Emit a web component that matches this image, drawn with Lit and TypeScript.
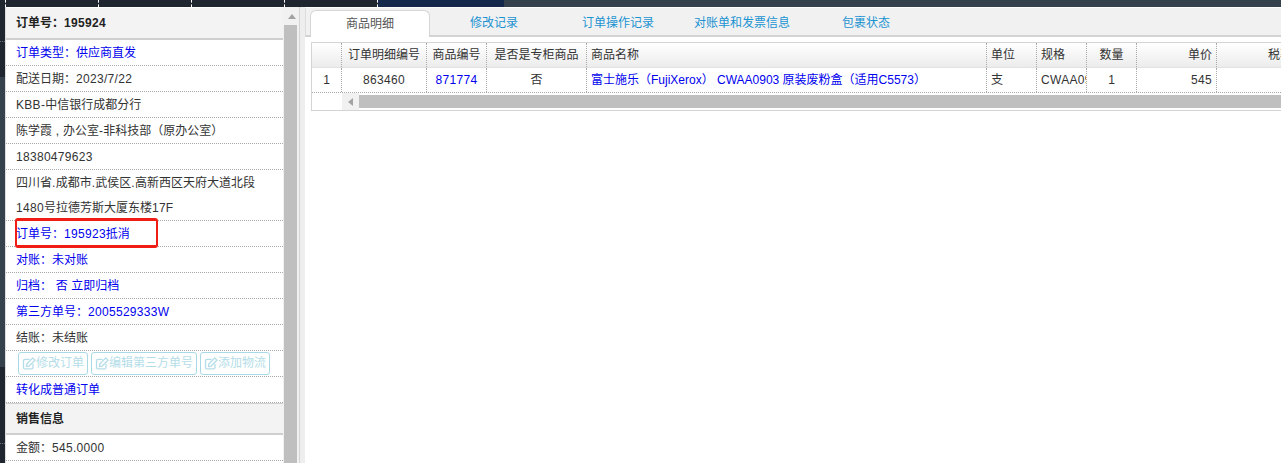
import { LitElement, html, css, svg } from "lit";
import { customElement } from "lit/decorators.js";

const editIcon = svg`<path d="M11 8V11.4C11 12.3 10.4 12.9 9.5 12.9H3C2.1 12.9 1.5 12.3 1.5 11.4V4.9C1.5 4 2.1 3.4 3 3.4H7.6" fill="none" stroke="currentColor" stroke-width="1.3"/><path d="M4.8 8 10.7 1.9 13 4.2 6.9 10.2 4.4 10.6Z" fill="none" stroke="currentColor" stroke-width="1.3" stroke-linejoin="round"/>`;

const t = (s: string) =>
  s.split(/([\x20-\x7e]+)/).map((p, i) => (i % 2 ? html`<span class="l">${p}</span>` : p));

type Row = { text: string; cls?: string };
const rows: Row[] = [
  { text: "订单类型：供应商直发", cls: "blue" },
  { text: "配送日期：2023/7/22" },
  { text: "KBB-中信银行成都分行" },
  { text: "陈学霞 , 办公室-非科技部（原办公室）" },
  { text: "18380479623" },
  { text: "四川省.成都市.武侯区.高新西区天府大道北段 1480号拉德芳斯大厦东楼17F", cls: "two" },
];
const rows2: Row[] = [
  { text: "对账：未对账", cls: "blue" },
  { text: "归档： 否 立即归档", cls: "blue pre" },
  { text: "第三方单号：2005529333W", cls: "blue" },
  { text: "结账：未结账" },
];
const tabs = ["商品明细", "修改记录", "订单操作记录", "对账单和发票信息", "包裹状态"];

@customElement("app-root")
export class AppRoot extends LitElement {
  static styles = css`
    :host {
      display: flex;
      flex-direction: column;
      width: 100%;
      height: 463px;
      overflow: hidden;
      background: #fff;
      font-family: "Liberation Sans", "Noto Sans CJK SC", sans-serif;
      font-size: 12px;
      color: #333;
    }
    .l { letter-spacing: 0.3px; }
    .top { display: flex; height: 7px; flex: none; background: #36414e; }
    .seg { width: 93px; flex: none; background: #20262f; border-right: 1px dashed #fff; box-sizing: border-box; }
    .seg.first { width: 6px; }
    .seg.navy { width: 126px; background: #14284b; border: 0; }
    .body { display: flex; flex: 1; min-height: 0; }
    .rail { width: 5px; flex: none; display: flex; flex-direction: column; }
    .rail .a { height: 70px; background: #20262f; }
    .rail .b { height: 290px; background: #36414e; }
    .rail .c { flex: 1; background: #20262f; }
    .tick { height: 0; border-top: 1px dotted #6a7280; }
    .a .tick { margin-top: 34px; }
    .c .tick { margin-top: 76px; }
    .a::before, .c::before { content: ""; display: table; }
    .panel { width: 278px; flex: none; box-sizing: border-box; border-left: 1px solid #ddd; }
    .head {
      height: 30px; line-height: 30px; padding-left: 10px; background: #f3f3f3;
      border-bottom: 2px solid #cfcfcf; font-weight: bold; color: #222; margin-top: 1px;
    }
    .head.second { margin-top: 0; height: 29px; border-top: 1px solid #cfcfcf; line-height: 30px; }
    .row {
      position: relative; height: 24px; padding-top: 1px; line-height: 25px; padding-left: 10px;
      border-bottom: 1px dotted #aaa; white-space: nowrap;
    }
    .row.two { height: 49px; white-space: normal; padding-right: 8px; }
    .row.pre { white-space: pre; }
    .row.blue { color: #0000ee; }
    .mark {
      position: absolute; left: 9px; top: -3px; width: 143px; height: 30px; box-sizing: border-box;
      border: 2px solid #f01d14; border-top-width: 3px; border-bottom-width: 3px; border-radius: 3px;
    }
    .row.btns { display: flex; gap: 3px; align-items: center; padding-left: 12px; height: 25px; padding-top: 0; }
    .btn {
      display: flex; align-items: center; height: 23px; box-sizing: border-box; padding: 0 3px;
      border: 1px solid #a9d9e7; border-radius: 3px; color: #b4dde8; line-height: 21px;
    }
    .btn svg { width: 14px; height: 14px; flex: none; margin-top: -2px; }
    .scroll { width: 16px; flex: none; background: #f1f1f1; display: flex; flex-direction: column; align-items: flex-start; }
    .arrow { width: 14px; height: 18px; display: flex; justify-content: center; align-items: center; padding-left: 1px; }
    .up { width: 0; height: 0; border: 4px solid transparent; border-top: 0; border-bottom: 5px solid #a3a3a3; margin-left: 1px; }
    .thumb { flex: 1; width: 13px; margin-left: 1px; background: #bfbfbf; }
    .divider { width: 1px; flex: none; background: #d4d4d4; }
    .gutter { width: 5px; flex: none; background: #eee; }
    .main { flex: 1; min-width: 0; display: flex; flex-direction: column; overflow: hidden; }
    .tabs {
      display: flex; gap: 4px; height: 29px; box-sizing: border-box; flex: none; padding: 2px 0 0 4px;
      background: #f1f1f1; border-bottom: 2px solid #d3d3d3; border-left: 1px solid #ddd; margin-top: 1px; overflow: visible;
    }
    .tab { width: 120px; flex: none; box-sizing: border-box; text-align: center; line-height: 27px; height: 27px; color: #1b93d1; }
    .tab.on {
      background: #fff; color: #555; border: 1px solid #d5d5d5; border-bottom: 0;
      border-radius: 6px 6px 0 0; line-height: 26px;
    }
    .tbl {
      margin: 5px 0 0 6px; box-sizing: border-box; height: 69px; flex: none;
      border: 1px solid #d4d4d4; border-right: 0; overflow: hidden;
    }
    .tr { display: flex; height: 25px; width: max-content; box-sizing: border-box; }
    .tr.hd { background: linear-gradient(#fff, #ececec); border-bottom: 1px solid #e2e2e2; }
    .tr.bd { border-bottom: 1px dotted #aaa; }
    .td {
      flex: none; box-sizing: border-box; padding: 0 4px; line-height: 25px; white-space: nowrap; overflow: hidden;
      border-right: 1px dotted #aaa;
    }
    .c { text-align: center; }
    .r { text-align: right; }
    .lnk { color: #0000ee; }
    .hbar { display: flex; height: 17px; }
    .hblank { width: 30px; flex: none; }
    .hleft { width: 17px; flex: none; background: #f1f1f1; display: flex; align-items: center; justify-content: center; box-sizing: border-box; }
    .left { width: 0; height: 0; border: 4px solid transparent; border-left: 0; border-right: 5px solid #a3a3a3; }
    .hthumb { flex: 1; background: #bfbfbf; margin: 2px 0; }
  `;

  private cols = [30, 85, 60, 100, 400, 50, 50, 50, 80, 80];

  private cell(i: number, text: unknown, cls = "") {
    return html`<div class="td ${cls}" style="width:${this.cols[i]}px">${text}</div>`;
  }

  render() {
    return html`
      <div class="top">
        <div class="seg first"></div>
        <div class="seg"></div><div class="seg"></div><div class="seg"></div><div class="seg"></div>
        <div class="seg navy"></div>
      </div>
      <div class="body">
        <div class="rail">
          <div class="a"><div class="tick"></div></div>
          <div class="b"></div>
          <div class="c"><div class="tick"></div></div>
        </div>
        <div class="panel">
          <div class="head">${t("订单号：195924")}</div>
          ${rows.map((r) => html`<div class="row ${r.cls ?? ""}">${t(r.text)}</div>`)}
          <div class="row blue">${t("订单号：195923抵消")}<div class="mark"></div></div>
          ${rows2.map((r) => html`<div class="row ${r.cls ?? ""}">${t(r.text)}</div>`)}
          <div class="row btns">
            <div class="btn"><svg viewBox="0 0 14 14">${editIcon}</svg>修改订单</div>
            <div class="btn"><svg viewBox="0 0 14 14">${editIcon}</svg>编辑第三方单号</div>
            <div class="btn"><svg viewBox="0 0 14 14">${editIcon}</svg>添加物流</div>
          </div>
          <div class="row blue">转化成普通订单</div>
          <div class="head second">销售信息</div>
          <div class="row">${t("金额：545.0000")}</div>
        </div>
        <div class="scroll">
          <div class="arrow"><div class="up"></div></div>
          <div class="thumb"></div>
        </div>
        <div class="divider"></div>
        <div class="gutter"></div>
        <div class="main">
          <div class="tabs">
            ${tabs.map((x, i) => html`<div class="tab ${i === 0 ? "on" : ""}">${x}</div>`)}
          </div>
          <div class="tbl">
            <div class="tr hd">
              ${this.cell(0, "")}
              ${this.cell(1, "订单明细编号", "c")}
              ${this.cell(2, "商品编号", "c")}
              ${this.cell(3, "是否是专柜商品", "c")}
              ${this.cell(4, "商品名称")}
              ${this.cell(5, "单位")}
              ${this.cell(6, "规格")}
              ${this.cell(7, "数量", "c")}
              ${this.cell(8, "单价", "r")}
              ${this.cell(9, "税率", "r")}
            </div>
            <div class="tr bd">
              ${this.cell(0, "1", "c")}
              ${this.cell(1, t("863460"), "c")}
              ${this.cell(2, t("871774"), "c lnk")}
              ${this.cell(3, "否", "c")}
              ${this.cell(4, "富士施乐（FujiXerox） CWAA0903 原装废粉盒（适用C5573）", "lnk")}
              ${this.cell(5, "支")}
              ${this.cell(6, t("CWAA0903"))}
              ${this.cell(7, "1", "c")}
              ${this.cell(8, t("545"), "r")}
              ${this.cell(9, "")}
            </div>
            <div class="hbar">
              <div class="hblank"></div>
              <div class="hleft"><div class="left"></div></div>
              <div class="hthumb"></div>
            </div>
          </div>
        </div>
      </div>
    `;
  }
}
